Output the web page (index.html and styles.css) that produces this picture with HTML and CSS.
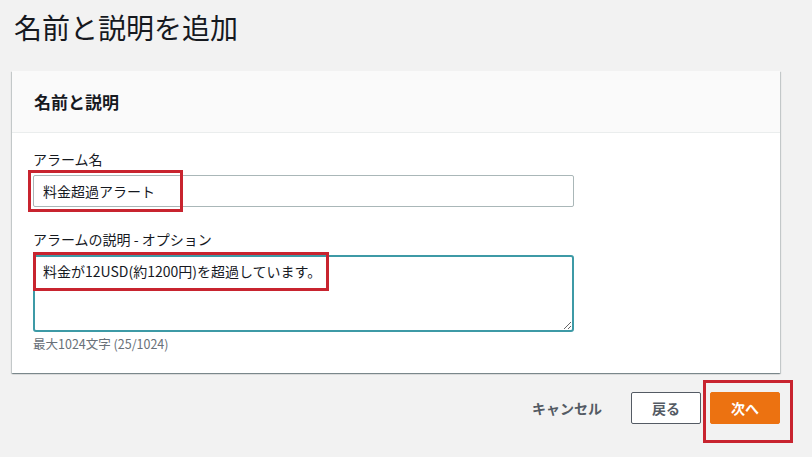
FILE: index.html
```html
<!DOCTYPE html>
<html lang="ja">
<head>
    <meta charset="UTF-8">
    <title>名前と説明を追加</title>
    <link rel="stylesheet" href="styles.css">
</head>
<body>
    <h1 class="page-title">名前と説明を追加</h1>

    <div class="card">
        <div class="card-header">
            <h2>名前と説明</h2>
        </div>
        <div class="card-body">
            <div class="field">
                <label class="field-label" for="alarmName">アラーム名</label>
                <div class="control">
                    <input type="text" id="alarmName" class="text-input" value="料金超過アラート">
                    <span class="mark mark-name"></span>
                </div>
            </div>
            <div class="field">
                <label class="field-label" for="alarmDesc">アラームの説明 - オプション</label>
                <div class="control">
                    <textarea id="alarmDesc" class="text-area">料金が12USD(約1200円)を超過しています。</textarea>
                    <span class="mark mark-desc"></span>
                </div>
                <div class="hint">最大1024文字 (25/1024)</div>
            </div>
        </div>
    </div>

    <div class="actions">
        <button class="btn btn-link">キャンセル</button>
        <button class="btn btn-normal">戻る</button>
        <div class="primary-wrap">
            <button class="btn btn-primary">次へ</button>
            <span class="mark mark-next"></span>
        </div>
    </div>
</body>
</html>
```

FILE: styles.css
```css
html, body {
    min-height: 100%;
}

body {
    margin: 0;
    padding: 0 12px 30px;
    background-color: #f2f2f2;
    font-family: "Noto Sans CJK JP", "Noto Sans", sans-serif;
    color: #16191f;
}

.page-title {
    margin: 0;
    padding: 7px 0 0 2px;
    height: 64px;
    box-sizing: border-box;
    font-size: 28px;
    font-weight: 400;
    line-height: 40px;
    color: #16191f;
}

.card {
    width: 768px;
    background-color: #fff;
    box-shadow: 0 1px 1px 0 rgba(0, 28, 36, 0.3), 1px 1px 1px 0 rgba(0, 28, 36, 0.15), -1px 1px 1px 0 rgba(0, 28, 36, 0.15);
    margin-top: 7px;
}

.card-header {
    height: 62px;
    box-sizing: border-box;
    background-color: #fafafa;
    border-bottom: 1px solid #eaeded;
    padding: 0 22px;
    display: flex;
    align-items: center;
}

.card-header h2 {
    margin: 0;
    font-size: 17px;
    font-weight: 700;
}

.card-body {
    padding: 15px 20px 20px 21px;
}

.field {
    margin-bottom: 21px;
}

.field:last-child {
    margin-bottom: 0;
}

.field-label {
    display: block;
    font-size: 14px;
    line-height: 22px;
    margin-bottom: 5px;
}

.control {
    position: relative;
    width: 541px;
}

.text-input {
    display: block;
    width: 100%;
    height: 32px;
    box-sizing: border-box;
    border: 1px solid #aab7b8;
    border-radius: 2px;
    padding: 0 9px;
    font-family: inherit;
    font-size: 14px;
    color: #16191f;
    background: #fff;
}

.text-area {
    display: block;
    width: 100%;
    height: 77px;
    box-sizing: border-box;
    border: 2px solid #3d9aa6;
    border-radius: 3px;
    padding: 3px 8px;
    font-family: inherit;
    font-size: 14px;
    line-height: 22px;
    color: #16191f;
    resize: vertical;
    outline: none;
}

.hint {
    margin-top: 3px;
    font-size: 12.5px;
    line-height: 18px;
    color: #687078;
}

.mark {
    position: absolute;
    border: 3px solid #c8242f;
    box-sizing: border-box;
    pointer-events: none;
}

.mark-name {
    left: -5px;
    top: -5px;
    width: 155px;
    height: 42px;
}

.mark-desc {
    left: 0;
    top: -3px;
    width: 296px;
    height: 39px;
}

.actions {
    width: 768px;
    display: flex;
    justify-content: flex-end;
    align-items: center;
    margin-top: 19px;
    gap: 9px;
}

.btn {
    height: 32px;
    box-sizing: border-box;
    font-family: inherit;
    font-size: 14px;
    font-weight: 700;
    padding: 0 20px;
    border-radius: 2px;
    cursor: pointer;
}

.btn-link {
    background: none;
    border: none;
    color: #545b64;
}

.btn-normal {
    background-color: #fff;
    border: 1px solid #545b64;
    color: #545b64;
    width: 70px;
    padding: 0;
}

.primary-wrap {
    position: relative;
    height: 32px;
}

.btn-primary {
    display: block;
    background-color: #ec7211;
    border: 1px solid #ec7211;
    color: #fff;
    width: 70px;
    padding: 0;
}

.mark-next {
    left: -7px;
    top: -12px;
    width: 90px;
    height: 63px;
}
```
